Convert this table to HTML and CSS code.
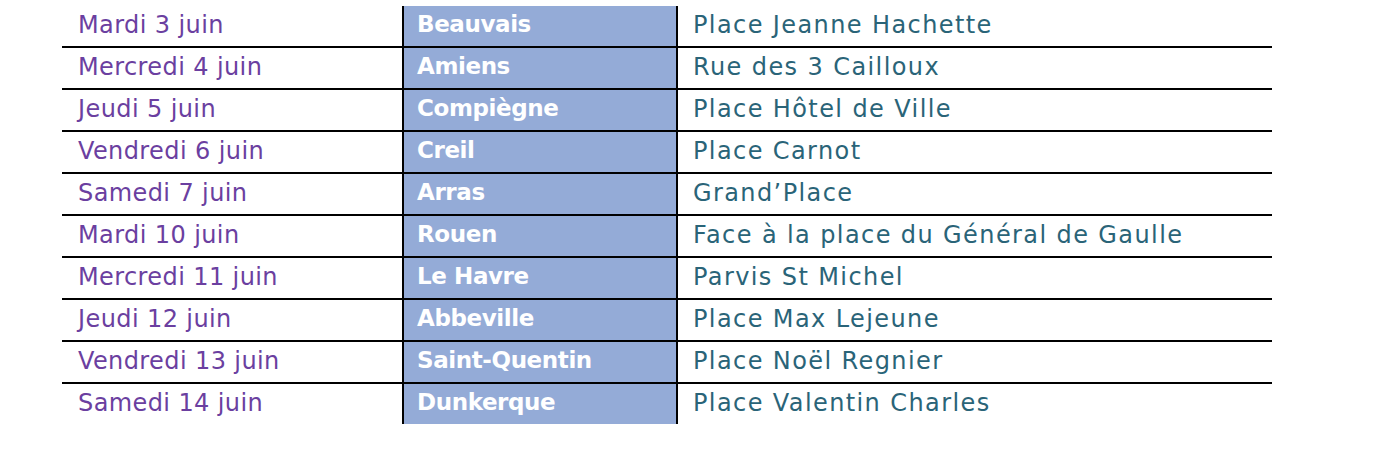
FILE: index.html
```html
<!DOCTYPE html>
<html lang="fr">
<head>
<meta charset="utf-8">
<link rel="stylesheet" href="styles.css">
</head>
<body>
<div class="table">
  <div class="row"><div class="date">Mardi 3 juin</div><div class="city">Beauvais</div><div class="place">Place Jeanne Hachette</div></div>
  <div class="row"><div class="date">Mercredi 4 juin</div><div class="city">Amiens</div><div class="place">Rue des 3 Cailloux</div></div>
  <div class="row"><div class="date">Jeudi 5 juin</div><div class="city">Compiègne</div><div class="place">Place Hôtel de Ville</div></div>
  <div class="row"><div class="date">Vendredi 6 juin</div><div class="city">Creil</div><div class="place">Place Carnot</div></div>
  <div class="row"><div class="date">Samedi 7 juin</div><div class="city">Arras</div><div class="place">Grand’Place</div></div>
  <div class="row"><div class="date">Mardi 10 juin</div><div class="city">Rouen</div><div class="place">Face à la place du Général de Gaulle</div></div>
  <div class="row"><div class="date">Mercredi 11 juin</div><div class="city">Le Havre</div><div class="place">Parvis St Michel</div></div>
  <div class="row"><div class="date">Jeudi 12 juin</div><div class="city">Abbeville</div><div class="place">Place Max Lejeune</div></div>
  <div class="row"><div class="date">Vendredi 13 juin</div><div class="city">Saint-Quentin</div><div class="place">Place Noël Regnier</div></div>
  <div class="row"><div class="date">Samedi 14 juin</div><div class="city">Dunkerque</div><div class="place">Place Valentin Charles</div></div>
</div>
</body>
</html>
```
FILE: styles.css
```css
html, body {
  margin: 0;
  padding: 0;
  background: #ffffff;
}
.table {
  margin: 6px 0 0 62px;
  width: 1210px;
  font-family: "DejaVu Sans", sans-serif;
  font-size: 24px;
}
.row {
  display: grid;
  grid-template-columns: 340px 276px 594px;
  height: 40px;
  border-bottom: 2px solid #000;
}
.row:last-child {
  border-bottom: none;
}
.row > div {
  line-height: 38px;
  white-space: nowrap;
}
.date {
  color: #6b3fa0;
  padding-left: 16px;
  letter-spacing: 0.4px;
}
.row > .city {
  background: #94abd7;
  color: #ffffff;
  font-weight: bold;
  font-size: 23px;
  letter-spacing: -0.4px;
  line-height: 37px;
  border-left: 2px solid #000;
  border-right: 2px solid #000;
  padding-left: 13px;
}
.place {
  color: #2a6478;
  padding-left: 15px;
  letter-spacing: 1.4px;
}
```
